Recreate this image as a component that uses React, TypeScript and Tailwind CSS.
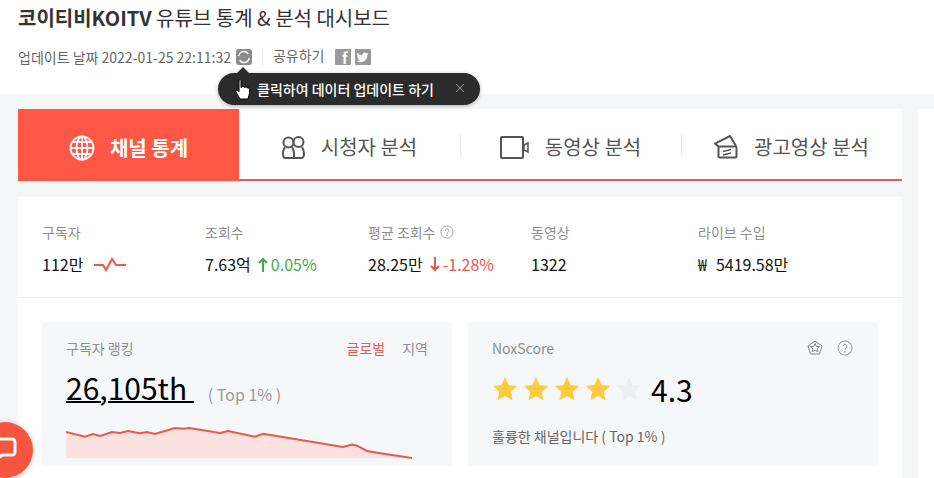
const font = { fontFamily: '"Noto Sans CJK KR", "Noto Sans", sans-serif' };

function HelpIcon({ size = 14 }: { size?: number }) {
  return (
    <svg width={size} height={size} viewBox="0 0 16 16" fill="none" stroke="#9a9a9a" strokeWidth="1">
      <circle cx="8" cy="8" r="7" />
      <path d="M6 6.4a2 2 0 1 1 3.1 1.7c-.7.5-1.1.8-1.1 1.7" />
      <circle cx="8" cy="11.8" r=".4" fill="#9a9a9a" />
    </svg>
  );
}

function Star({ color }: { color: string }) {
  return (
    <svg width="26" height="26" viewBox="0 0 24 24" fill={color}>
      <path d="M12 1l3.3 7.4 7.9.8-5.9 5.3 1.7 7.9L12 18.4l-7 4 1.7-7.9L.8 9.2l7.9-.8z" />
    </svg>
  );
}

function Tab({ icon, label }: { icon: React.ReactNode; label: string }) {
  return (
    <div className="flex h-[70px] items-center justify-center gap-[16px] pt-[6px] text-[20px] text-[#555]">
      {icon}
      <span>{label}</span>
    </div>
  );
}

function Stat({ label, children, className }: { label: React.ReactNode; children: React.ReactNode; className: string }) {
  return (
    <div className={className}>
      <div className="flex h-5 items-center gap-1 text-[14px] text-[#8f8f8f]">{label}</div>
      <div className="mt-[10px] flex h-6 items-center text-[16px] text-[#111]">{children}</div>
    </div>
  );
}

const chartLine =
  "M0 5L19 9.700L27 7L34 9L46 5L54 6L62 4L74 6.300L81 5L89 7L109 1L117 1.700L123 1L154 6L162 4L189 9.700L197 6.700L277 20L286 17.600L291 18.700L301 24L311 25.700L346 31";

export default function App() {
  return (
    <div style={font} className="relative h-[478px] w-[934px] overflow-hidden bg-[#f5f6f8]">
      {/* header */}
      <div className="h-[94px] bg-white pl-[18px]">
        <h1 className="h-[36px] text-[20px] leading-[36px] text-[#333]">
          <span className="font-bold">코이티비KOITV</span> 유튜브 통계 &amp; 분석 대시보드
        </h1>
        <div className="mt-[10px] flex h-[22px] items-center text-[14px] text-[#666]">
          <span>업데이트 날짜 2022-01-25 22:11:32</span>
          <span className="ml-[5px] flex h-4 w-4 items-center justify-center rounded-[3px] bg-[#8c8c8c]">
            <svg width="14" height="14" viewBox="0 0 16 16" fill="none" stroke="#fff" strokeWidth="1.6">
              <path d="M2 7a6 6 0 0 1 11-2.500M14 9a6 6 0 0 1-11 2.500" />
            </svg>
          </span>
          <span className="ml-[10px] h-[18px] w-px bg-[#e8e8e8]" />
          <span className="-mt-[3px] ml-[10px]">공유하기</span>
          <span className="ml-[10px] flex h-4 w-4 items-end justify-end rounded-[1px] bg-[#999] pr-[3px] text-[15px] leading-[15px] font-bold text-white">f</span>
          <span className="ml-[4px] flex h-4 w-4 items-center justify-center rounded-[1px] bg-[#999]">
            <svg width="13" height="13" viewBox="0 0 24 24" fill="#fff">
              <path d="M23 5a9 9 0 0 1-2.600.7A4.500 4.500 0 0 0 22.400 3.200a9 9 0 0 1-2.900 1.100 4.500 4.500 0 0 0-7.700 4.100A12.800 12.800 0 0 1 2.500 3.700a4.500 4.500 0 0 0 1.400 6 4.500 4.500 0 0 1-2-.6c0 2.200 1.500 4.100 3.600 4.500a4.500 4.500 0 0 1-2 .1 4.500 4.500 0 0 0 4.200 3.100A9 9 0 0 1 1 18.700 12.800 12.800 0 0 0 8 20.700c8.300 0 12.900-6.900 12.900-12.900v-.6A9 9 0 0 0 23 5z" />
            </svg>
          </span>
        </div>
      </div>

      {/* body */}
      <div className="pt-[15px] pl-[18px]">
        <div className="grid w-[884px] grid-cols-4 border-b-2 border-[#d9605a] bg-white">
          <div className="-mb-0.5 flex h-[72px] items-center justify-center gap-[15px] bg-[#ff5745] pt-[6px] text-[20px] font-bold text-white">
            <svg width="26" height="26" viewBox="0 0 26 26" fill="none" stroke="#fff" strokeWidth="1.800">
              <circle cx="13" cy="13" r="11.500" />
              <ellipse cx="13" cy="13" rx="5.500" ry="11.500" />
              <path d="M13 1.500v23M1.500 13h23M3.500 7h19M3.500 19h19" />
            </svg>
            <span>채널 통계</span>
          </div>
          <Tab
            label="시청자 분석"
            icon={
              <svg width="23" height="23" viewBox="0 0 23 23" fill="none" stroke="#555" strokeWidth="2">
                <circle cx="6.500" cy="6.500" r="5" />
                <circle cx="16.500" cy="6" r="5" />
                <path d="M3 11.500C1.500 13 1 15 1 18c0 2.500 1 4 2.500 4H19c2 0 3-1.500 3-4 0-3-.5-5-2-7" />
                <path d="M12 22v-4c0-3-.5-5-2-7" />
              </svg>
            }
          />
          <div className="relative">
            <span className="absolute top-6 left-0 h-[24px] w-px bg-[#ececec]" />
            <Tab
              label="동영상 분석"
              icon={
                <svg width="29" height="23" viewBox="0 0 29 23" fill="none" stroke="#555" strokeWidth="2">
                  <rect x="1" y="1" width="22" height="21" rx="1" />
                  <path d="M24 9l4-2v9l-4-2z" strokeWidth="1.500" />
                </svg>
              }
            />
          </div>
          <div className="relative">
            <span className="absolute top-6 left-0 h-[24px] w-px bg-[#ececec]" />
            <Tab
              label="광고영상 분석"
              icon={
                <svg width="24" height="24" viewBox="0 0 24 24" fill="none" stroke="#555" strokeWidth="2">
                  <path d="M5 12L1 8.500 16 1l6 10" />
                  <rect x="4.500" y="11.500" width="18" height="11" rx="1" />
                  <path d="M9 16.500l8-2M9 20l8-2" strokeWidth="1.500" />
                </svg>
              }
            />
          </div>
        </div>

        <div className="mt-4 h-[400px] w-[884px] bg-white">
          <div className="flex h-[101px] items-start border-b border-[#ececec] pt-[25px] pl-6">
            <Stat label="구독자" className="w-[163px]">
              <span>112만</span>
              <svg className="ml-[10px]" width="34" height="16" viewBox="0 0 34 16" fill="none" stroke="#f0594c" strokeWidth="2.200">
                <path d="M1 9h9l3 5 6-11 4 6h10" />
              </svg>
            </Stat>
            <Stat label="조회수" className="w-[163px]">
              <span>7.63억</span>
              <svg className="mr-[3px] ml-[7px]" width="10" height="15" viewBox="0 0 10 15" fill="none" stroke="#3eae4b" strokeWidth="2">
                <path d="M5 15V2M1 6l4-4 4 4" />
              </svg>
              <span className="text-[#3eae4b]">0.05%</span>
            </Stat>
            <Stat label={<><span>평균 조회수</span><HelpIcon /></>} className="w-[163px]">
              <span>28.25만</span>
              <svg className="mr-[3px] ml-[7px]" width="10" height="15" viewBox="0 0 10 15" fill="none" stroke="#e8584f" strokeWidth="2">
                <path d="M5 0v13M1 9l4 4 4-4" />
              </svg>
              <span className="text-[#e8584f]">-1.28%</span>
            </Stat>
            <Stat label="동영상" className="w-[167px]">
              <span>1322</span>
            </Stat>
            <Stat label="라이브 수입" className="w-[160px]">
              <span>₩</span>
              <span className="ml-[9px]">5419.58만</span>
            </Stat>
          </div>

          <div className="flex gap-4 pt-6 pl-6">
            {/* ranking card */}
            <div className="h-[144px] w-[410px] rounded-[2px] bg-[#f6f7f9] px-6 pt-4">
              <div className="flex h-5 items-center justify-between text-[14px] text-[#8f8f8f]">
                <span>구독자 랭킹</span>
                <span className="flex gap-[17px]">
                  <span className="text-[#d9605a]">글로벌</span>
                  <span>지역</span>
                </span>
              </div>
              <div className="mt-[9px] flex h-[40px] items-center">
                <span className="text-[30px] leading-[40px] text-black underline decoration-2">26,105th&nbsp;</span>
                <span className="ml-[14px] pt-[14px] text-[16px] text-[#9a9a9a]">( Top 1% )</span>
              </div>
              <svg className="mt-[20px] block" width="346" height="32" viewBox="0 0 346 32" fill="none">
                <path d={chartLine + "H0Z"} fill="#fbe1df" stroke="none" />
                <path d={chartLine} stroke="#e8584f" strokeWidth="2" />
              </svg>
            </div>

            {/* score card */}
            <div className="h-[144px] w-[410px] rounded-[2px] bg-[#f6f7f9] pt-4 pr-[25px] pl-6">
              <div className="flex h-5 items-center justify-between text-[14px] text-[#8f8f8f]">
                <span>NoxScore</span>
                <span className="flex items-center gap-[14px]">
                  <svg width="16" height="16" viewBox="0 0 16 16" fill="none" stroke="#888" strokeWidth="1">
                    <path d="M8 1l7 5-2.500 8h-9L1 6z" />
                    <path d="M8 3.500l1.400 3h3.100l-2.400 2.200.8 3.100L8 10.200l-2.900 1.600.8-3.100-2.400-2.200h3.100z" />
                  </svg>
                  <HelpIcon size={16} />
                </span>
              </div>
              <div className="mt-[12px] flex h-[38px] items-center">
                <span className="flex gap-[5px]">
                  <Star color="#ffcb3d" />
                  <Star color="#ffcb3d" />
                  <Star color="#ffcb3d" />
                  <Star color="#ffcb3d" />
                  <Star color="#eceef0" />
                </span>
                <span className="ml-[9px] text-[30px] text-black">4.3</span>
              </div>
              <div className="mt-[18px] text-[14px] text-[#666]">훌륭한 채널입니다 ( Top 1% )</div>
            </div>
          </div>
        </div>
      </div>

      {/* right column edge */}
      <div className="absolute top-[109px] left-[918px] h-[369px] w-4 bg-white" />

      {/* tooltip */}
      <div className="absolute top-[73px] left-[218px] flex h-[32px] w-[262px] items-center rounded-full bg-[#2b2b2b] pl-[39px] text-[14px] font-medium text-white shadow-[0_1px_4px_rgba(0,0,0,0.3)]">
        <span className="absolute -top-[6px] left-[19px] h-0 w-0 border-r-[6px] border-b-[6px] border-l-[6px] border-r-transparent border-b-[#2b2b2b] border-l-transparent" />
        <span>클릭하여 데이터 업데이트 하기</span>
        <svg className="absolute top-[10px] right-[15px]" width="10" height="10" viewBox="0 0 10 10" stroke="#999" strokeWidth="1">
          <path d="M1 1l8 8M9 1l-8 8" />
        </svg>
      </div>

      {/* hand cursor */}
      <svg className="absolute top-[79px] left-[235px]" width="16" height="21" viewBox="0 0 16 21" fill="#fff" stroke="#000" strokeWidth="1">
        <path d="M4 1.500c0-1 2-1 2 0v7l1-.5c0-1 2-1 2 0l1 .5c0-.7 2-.7 2 .2l1 .3c1 0 1.500.8 1.500 2v3.500l-1.500 5.500H5L1 13c-.8-1.200.5-2.200 1.500-1.300L4 13z" />
      </svg>

      {/* chat bubble */}
      <div className="absolute top-[422px] -left-[23px] flex h-[56px] w-[56px] items-center justify-center rounded-full bg-[#f6553f] shadow-[0_1px_6px_rgba(0,0,0,0.2)]">
        <svg className="-ml-[2px]" width="26" height="26" viewBox="0 0 26 26" fill="none" stroke="#fff" strokeWidth="3">
          <path d="M4 2h17a3 3 0 0 1 3 3v10a3 3 0 0 1-3 3H11l-6 5v-5H4a3 3 0 0 1-3-3V5a3 3 0 0 1 3-3z" />
        </svg>
      </div>
    </div>
  );
}
